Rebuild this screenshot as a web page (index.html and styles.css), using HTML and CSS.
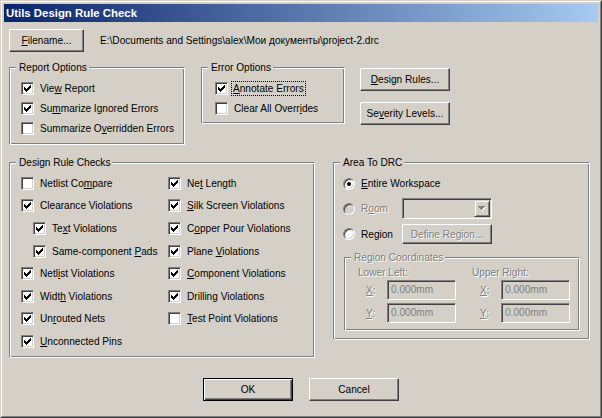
FILE: index.html
```html
<!DOCTYPE html>
<html>
<head>
<meta charset="utf-8">
<title>Utils Design Rule Check</title>
<link rel="stylesheet" href="styles.css">
</head>
<body>
<div class="window">
  <div class="frame">
    <div class="titlebar"><span class="title">Utils Design Rule Check</span></div>
    <div class="content">
      <div class="row-file">
        <div class="btn btn-file"><span><u>F</u>ilename...</span></div>
        <span class="path">E:\Documents and Settings\alex\Мои документы\project-2.drc</span>
      </div>

      <div class="row-options">
        <fieldset class="group report">
          <legend>Report Options</legend>
          <div class="stack report-body">
            <div class="chk"><span class="cb on"></span><span>Vie<u>w</u> Report</span></div>
            <div class="chk"><span class="cb on"></span><span>Su<u>m</u>marize Ignored Errors</span></div>
            <div class="chk"><span class="cb"></span><span>Summarize O<u>v</u>erridden Errors</span></div>
          </div>
        </fieldset>
        <fieldset class="group errors">
          <legend>Error Options</legend>
          <div class="stack errors-body">
            <div class="chk"><span class="cb on"></span><span class="focus"><u>A</u>nnotate Errors</span></div>
            <div class="chk"><span class="cb"></span><span>Clear All Overr<u>i</u>des</span></div>
          </div>
        </fieldset>
        <div class="side-buttons">
          <div class="btn"><span><u>D</u>esign Rules...</span></div>
          <div class="btn"><span>Se<u>v</u>erity Levels...</span></div>
        </div>
      </div>

      <div class="row-main">
        <fieldset class="group drc">
          <legend>Design Rule Checks</legend>
          <div class="checks">
            <div class="chk"><span class="cb"></span><span>Netlist Co<u>m</u>pare</span></div>
            <div class="chk"><span class="cb on"></span><span>Clearance Violations</span></div>
            <div class="chk sub"><span class="cb on"></span><span>Te<u>x</u>t Violations</span></div>
            <div class="chk sub"><span class="cb on"></span><span>Same-component <u>P</u>ads</span></div>
            <div class="chk"><span class="cb on"></span><span>Netl<u>i</u>st Violations</span></div>
            <div class="chk"><span class="cb on"></span><span>Widt<u>h</u> Violations</span></div>
            <div class="chk"><span class="cb on"></span><span>Un<u>r</u>outed Nets</span></div>
            <div class="chk"><span class="cb on"></span><span><u>U</u>nconnected Pins</span></div>
            <div class="chk"><span class="cb on"></span><span>Ne<u>t</u> Length</span></div>
            <div class="chk"><span class="cb on"></span><span><u>S</u>ilk Screen Violations</span></div>
            <div class="chk"><span class="cb on"></span><span>C<u>o</u>pper Pour Violations</span></div>
            <div class="chk"><span class="cb on"></span><span>Plane <u>V</u>iolations</span></div>
            <div class="chk"><span class="cb on"></span><span><u>C</u>omponent Violations</span></div>
            <div class="chk"><span class="cb on"></span><span>Drilling Violations</span></div>
            <div class="chk"><span class="cb"></span><span><u>T</u>est Point Violations</span></div>
          </div>
        </fieldset>

        <fieldset class="group area">
          <legend>Area To DRC</legend>
          <div class="area-body">
            <div class="radio-line"><span class="rb on"></span><span><u>E</u>ntire Workspace</span></div>
            <div class="area-grid">
              <div class="radio-line"><span class="rb off"></span><span class="dis">R<u>o</u>om</span></div>
              <div class="combo">
                <div class="combo-btn">
                  <svg width="8" height="5" viewBox="0 0 8 5"><path fill="#fff" transform="translate(1 1)" d="M0 0h7v1h-1v1h-1v1h-1v1h-1v-1h-1v-1h-1v-1h-1z"/><path fill="#808080" d="M0 0h7v1h-1v1h-1v1h-1v1h-1v-1h-1v-1h-1v-1h-1z"/></svg>
                </div>
              </div>
              <div class="radio-line"><span class="rb"></span><span>Region</span></div>
              <div class="btn btn-region"><span class="dis">Define Region...</span></div>
            </div>
            <fieldset class="group coords">
              <legend class="dis">Region Coordinates</legend>
              <div class="coords-body">
                <div class="coord-col">
                  <div class="coord-head dis">Lower Left:</div>
                  <div class="coord-row"><span class="axis dis"><u>X</u>:</span><span class="edit">0.000mm</span></div>
                  <div class="coord-row"><span class="axis dis"><u>Y</u>:</span><span class="edit">0.000mm</span></div>
                </div>
                <div class="coord-col">
                  <div class="coord-head dis">Upper Right:</div>
                  <div class="coord-row"><span class="axis dis"><u>X</u>:</span><span class="edit">0.000mm</span></div>
                  <div class="coord-row"><span class="axis dis"><u>Y</u>:</span><span class="edit">0.000mm</span></div>
                </div>
              </div>
            </fieldset>
          </div>
        </fieldset>
      </div>

      <div class="row-actions">
        <div class="btn default"><span>OK</span></div>
        <div class="btn"><span>Cancel</span></div>
      </div>
    </div>
  </div>
</div>
</body>
</html>
```
FILE: styles.css
```css
html, body {
  margin: 0;
  padding: 0;
  background: #d4d0c8;
}
body {
  width: 602px;
  height: 418px;
  overflow: hidden;
  font-family: "Liberation Sans", Arial, sans-serif;
  font-size: 10.1px;
  color: #000;
}
u { text-decoration-thickness: 1px; text-underline-offset: 1px; }

.window {
  width: 602px;
  height: 418px;
  box-sizing: border-box;
  border: 1px solid;
  border-color: #d4d0c8 #404040 #404040 #d4d0c8;
  background: #d4d0c8;
}
.frame {
  height: 100%;
  box-sizing: border-box;
  border: 1px solid;
  border-color: #fff #808080 #808080 #fff;
  padding: 2px;
  display: flex;
  flex-direction: column;
}
.titlebar {
  flex: none;
  height: 18px;
  background: linear-gradient(to right, #0a246a, #a6caf0);
  display: flex;
  align-items: center;
  padding-left: 2px;
}
.title {
  color: #fff;
  font-weight: bold;
  font-size: 11.4px;
}
.content { flex: 1; }

/* buttons */
.btn {
  box-sizing: border-box;
  width: 90px;
  height: 23px;
  border: 1px solid;
  border-color: #fff #404040 #404040 #fff;
  box-shadow: inset -1px -1px #808080;
  display: flex;
  align-items: center;
  justify-content: center;
  white-space: nowrap;
  background: #d4d0c8;
}
.btn.default {
  border-color: #000;
  box-shadow: inset 1px 1px #fff, inset -1px -1px #404040, inset -2px -2px #808080;
}

/* row 1 */
.row-file {
  display: flex;
  align-items: center;
  margin: 7px 0 0 5px;
}
.btn-file { width: 75px; }
.path { margin-left: 16px; white-space: nowrap; }

/* group boxes */
.group {
  margin: 0;
  padding: 0;
  min-width: 0;
  box-sizing: border-box;
  border: 1px solid;
  border-color: #808080 #fff #fff #808080;
  box-shadow: inset 1px 1px #fff, inset -1px -1px #808080;
}
.group > legend {
  margin-left: 6px;
  padding: 0 2px 0 3px;
  height: 13px;
  line-height: 13px;
  background: #d4d0c8;
  white-space: nowrap;
}

/* row 2 */
.row-options {
  display: flex;
  align-items: flex-start;
  margin: 9px 0 0 5px;
}
.report { width: 176px; height: 84px; }
.errors { width: 144px; height: 63px; margin-left: 16px; }
.side-buttons {
  display: flex;
  flex-direction: column;
  gap: 11px;
  margin: 7px 0 0 15px;
}
.stack {
  display: flex;
  flex-direction: column;
  gap: 7px;
  padding-top: 8px;
}
.report-body { padding-left: 11px; }
.errors-body { padding-left: 13px; }

/* checkbox */
.chk {
  display: flex;
  align-items: center;
  gap: 6px;
  height: 13px;
  line-height: 13px;
  white-space: nowrap;
}
.cb {
  flex: none;
  width: 13px;
  height: 13px;
  box-sizing: border-box;
  background: #fff;
  border: 1px solid;
  border-color: #808080 #fff #fff #808080;
  box-shadow: inset 1px 1px #404040, inset -1px -1px #d4d0c8;
}
.cb.on::after {
  content: "";
  display: block;
  width: 1px;
  height: 1px;
  box-shadow:
    8px 2px #000,
    7px 3px #000, 8px 3px #000,
    2px 4px #000, 6px 4px #000, 7px 4px #000, 8px 4px #000,
    2px 5px #000, 3px 5px #000, 5px 5px #000, 6px 5px #000, 7px 5px #000,
    2px 6px #000, 3px 6px #000, 4px 6px #000, 5px 6px #000, 6px 6px #000,
    3px 7px #000, 4px 7px #000, 5px 7px #000,
    4px 8px #000;
}
.focus {
  margin-left: -2px;
  padding: 0 1px;
  outline: 1px dotted #000;
  outline-offset: 0;
}

/* row 3 */
.row-main {
  display: flex;
  align-items: flex-start;
  margin: 11px 0 0 5px;
}
.drc { width: 306px; height: 202px; }
.checks {
  display: grid;
  grid-auto-flow: column;
  grid-template-columns: 147px auto;
  grid-template-rows: 22px 23px 23px 22px 23px 22px 23px 13px;
  align-items: start;
  padding: 8px 0 0 11px;
}
.chk.sub { margin-left: 12px; }

.area { width: 257px; height: 184px; margin-left: 18px; }
.area-body { padding: 8px 0 0 9px; }
.radio-line {
  display: flex;
  align-items: center;
  gap: 6px;
  height: 13px;
  white-space: nowrap;
}
.rb {
  flex: none;
  width: 12px;
  height: 12px;
  box-sizing: border-box;
  border-radius: 50%;
  background: #fff;
  border: 1px solid;
  border-color: #808080 #fff #fff #808080;
  box-shadow: inset 1px 1px #404040, inset -1px -1px #d4d0c8;
  display: flex;
  align-items: center;
  justify-content: center;
}
.rb.off { background: #d4d0c8; }
.rb.on::after {
  content: "";
  width: 4px;
  height: 4px;
  border-radius: 50%;
  background: #000;
}
.area-grid {
  display: grid;
  grid-template-columns: 59px 90px;
  grid-template-rows: 21px 20px;
  row-gap: 5px;
  align-items: center;
  margin-top: 8px;
}
.combo {
  box-sizing: border-box;
  height: 21px;
  border: 1px solid;
  border-color: #808080 #fff #fff #808080;
  box-shadow: inset 1px 1px #404040, inset -1px -1px #d4d0c8;
  padding: 1px;
  display: flex;
  justify-content: flex-end;
}
.combo-btn {
  box-sizing: border-box;
  width: 16px;
  height: 17px;
  border: 1px solid;
  border-color: #d4d0c8 #404040 #404040 #d4d0c8;
  box-shadow: inset 1px 1px #fff, inset -1px -1px #808080;
  display: flex;
  align-items: center;
  justify-content: center;
}
.btn-region { height: 20px; }

.dis {
  color: #808080;
  text-shadow: 1px 1px 0 #fff;
}

.coords {
  width: 236px;
  height: 80px;
  margin: 7px 0 0 1px;
}
.coords-body {
  display: grid;
  grid-template-columns: 114px auto;
  padding: 2px 0 0 13px;
}
.coord-head { height: 13px; line-height: 13px; margin-bottom: 1px; white-space: nowrap; }
.coord-row {
  display: flex;
  align-items: center;
  height: 20px;
  margin-bottom: 3px;
}
.axis { width: 29px; padding-left: 8px; box-sizing: border-box; flex: none; }
.edit {
  box-sizing: border-box;
  width: 69px;
  height: 20px;
  border: 1px solid;
  border-color: #808080 #fff #fff #808080;
  box-shadow: inset 1px 1px #404040, inset -1px -1px #d4d0c8;
  padding-left: 3px;
  line-height: 18px;
  color: #808080;
}

/* bottom buttons */
.row-actions {
  display: flex;
  justify-content: center;
  gap: 16px;
  margin-top: 20px;
}
```
